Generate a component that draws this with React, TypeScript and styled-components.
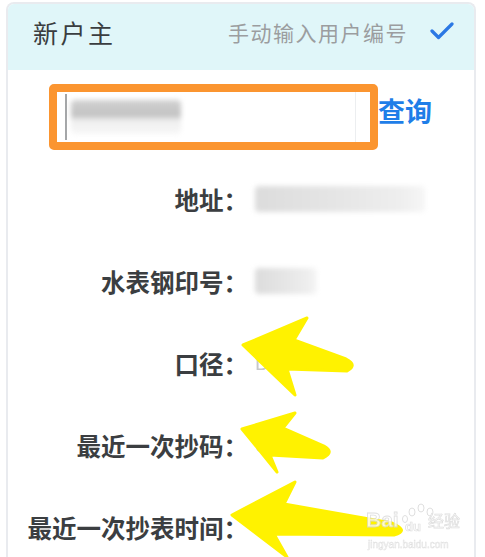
import React from "react";
import styled, { createGlobalStyle } from "styled-components";

const GlobalStyle = createGlobalStyle`
  html, body {
    margin: 0;
    padding: 0;
    background: #ffffff;
    overflow: hidden;
  }
  body {
    font-family: "Noto Sans CJK SC", "Noto Sans", sans-serif;
  }
`;

type Row = { label: string; value: string; blur?: number };

const rows: Row[] = [
  { label: "地址：", value: "", blur: 170 },
  { label: "水表钢印号：", value: "", blur: 62 },
  { label: "口径：", value: "DN100" },
  { label: "最近一次抄码：", value: "010" },
  { label: "最近一次抄表时间：", value: "2021-02-2" },
];

const App = () => {
  return (
    <Page>
      <GlobalStyle />
      <Card>
        <Header>
          <Title>新户主</Title>
          <ManualLink>手动输入用户编号</ManualLink>
          <svg width="24" height="20" viewBox="0 0 24 20">
            <path d="M2 9 L8.5 15.5 L22 2" fill="none" stroke="#2b78e4" strokeWidth="3.2" strokeLinecap="round" strokeLinejoin="round" />
          </svg>
        </Header>

        <SearchRow>
          <Highlight>
            <InputBox>
              <Caret />
              <Blurred $w={110} $h={34} $light={false} />
            </InputBox>
          </Highlight>
          <QueryBtn>查询</QueryBtn>
        </SearchRow>

        <Fields>
          {rows.map((r) => (
            <FieldRow key={r.label}>
              <Label>{r.label}</Label>
              {r.blur ? (
                <Blurred $w={r.blur} $h={26} $light={true} />
              ) : (
                <Value>{r.value}</Value>
              )}
            </FieldRow>
          ))}
        </Fields>
      </Card>

      <Overlay width="485" height="557" viewBox="0 0 485 557">
        <g fill="#fff200" stroke="#fff200" strokeWidth="3" strokeLinejoin="round">
          <path d="M243 345 L307 318 L294 340 L346 359 Q358 365 347 371 L287 369 L295 395 Z" />
          <path d="M242 429 L295 413 L283 428 L324 446 Q335 452 323 458 L270 455 L277 472 Z" />
          <path d="M232 515 L295 482 L284 504 L392 523 Q410 531 394 535 L274 534 L287 557 Z" />
        </g>
        <g opacity="0.8">
          <text x="366" y="527" fontFamily="Liberation Sans, sans-serif" fontWeight="700" fontSize="21" fill="#ffffff" stroke="#d6d6d6" strokeWidth="0.8">Bai</text>
          <g fill="none" stroke="#d6d6d6" strokeWidth="1">
            <ellipse cx="412" cy="512" rx="3" ry="4" />
            <ellipse cx="421" cy="508" rx="3" ry="4" />
            <ellipse cx="430" cy="512" rx="3" ry="4" />
            <ellipse cx="405" cy="519" rx="2.5" ry="3.5" />
          </g>
          <text x="405" y="531" fontFamily="Liberation Sans, sans-serif" fontWeight="700" fontSize="13" fill="#ffffff" stroke="#d6d6d6" strokeWidth="0.7">du</text>
          <text x="428" y="527" fontFamily="Noto Sans CJK SC, sans-serif" fontSize="16" fill="#ffffff" stroke="#d6d6d6" strokeWidth="0.7">经验</text>
          <text x="368" y="548" fontFamily="Liberation Sans, sans-serif" fontSize="10" fill="#ffffff" stroke="#d8d8d8" strokeWidth="0.5">jingyan.baidu.com</text>
        </g>
      </Overlay>
    </Page>
  );
};

const Page = styled.div`
  position: relative;
  width: 485px;
  height: 557px;
  overflow: hidden;
  background: #ffffff;
`;

const Card = styled.div`
  margin: 2px 0 0 6px;
  width: 466px;
  height: 560px;
  border: 2px solid #e9ebef;
  border-bottom: none;
  border-radius: 8px 8px 0 0;
  overflow: hidden;
  background: #ffffff;
`;

const Header = styled.div`
  display: flex;
  align-items: center;
  height: 66px;
  padding: 0 20px 10px 25px;
  box-sizing: border-box;
  background: #e0f6f9;
`;

const Title = styled.div`
  font-size: 25px;
  letter-spacing: 2.5px;
  color: #3a3d40;
  flex: 1;
`;

const ManualLink = styled.div`
  font-size: 21px;
  letter-spacing: 1.5px;
  color: #9b9d9f;
  margin-right: 22px;
`;

const SearchRow = styled.div`
  display: flex;
  align-items: flex-start;
  padding: 14px 0 0 41px;
`;

const Highlight = styled.div`
  width: 313px;
  height: 50px;
  border: 8px solid #fb9530;
  border-radius: 5px;
  background: #ffffff;
`;

const InputBox = styled.div`
  display: flex;
  align-items: center;
  gap: 4px;
  height: 100%;
  margin-left: 8px;
  margin-right: 14px;
  border-right: 1px solid #eceef0;
`;

const Caret = styled.div`
  width: 2px;
  height: 46px;
  background: #a4a6a8;
`;

const Blurred = styled.div<{ $w: number; $h: number; $light: boolean }>`
  width: ${(p) => p.$w}px;
  height: ${(p) => p.$h}px;
  border-radius: 4px;
  background: ${(p) =>
    p.$light
      ? "linear-gradient(90deg, #dcdcdc 0%, #e6e6e6 50%, #eeeeee 85%, #f6f6f6 100%)"
      : "linear-gradient(180deg, #d2d2d2 0%, #c2c2c2 45%, #efefef 60%, #f7f7f7 100%)"};
  filter: blur(2.5px);
`;

const QueryBtn = styled.div`
  font-size: 27px;
  font-weight: 700;
  color: #1f7ee8;
  margin-top: 13px;
  line-height: 1;
`;

const Fields = styled.div`
  display: flex;
  flex-direction: column;
  padding-top: 8px;
`;

const FieldRow = styled.div`
  display: grid;
  grid-template-columns: 240px 1fr;
  column-gap: 7px;
  align-items: center;
  height: 82px;
`;

const Label = styled.div`
  text-align: right;
  font-size: 24.5px;
  font-weight: 700;
  color: #3b3e41;
  white-space: nowrap;
`;

const Value = styled.div`
  font-size: 20px;
  color: #c6c8ca;
  letter-spacing: 1px;
  font-family: "Liberation Sans", sans-serif;
  filter: blur(0.5px);
`;

const Overlay = styled.svg`
  position: absolute;
  left: 0;
  top: 0;
  pointer-events: none;
`;

export default App;
